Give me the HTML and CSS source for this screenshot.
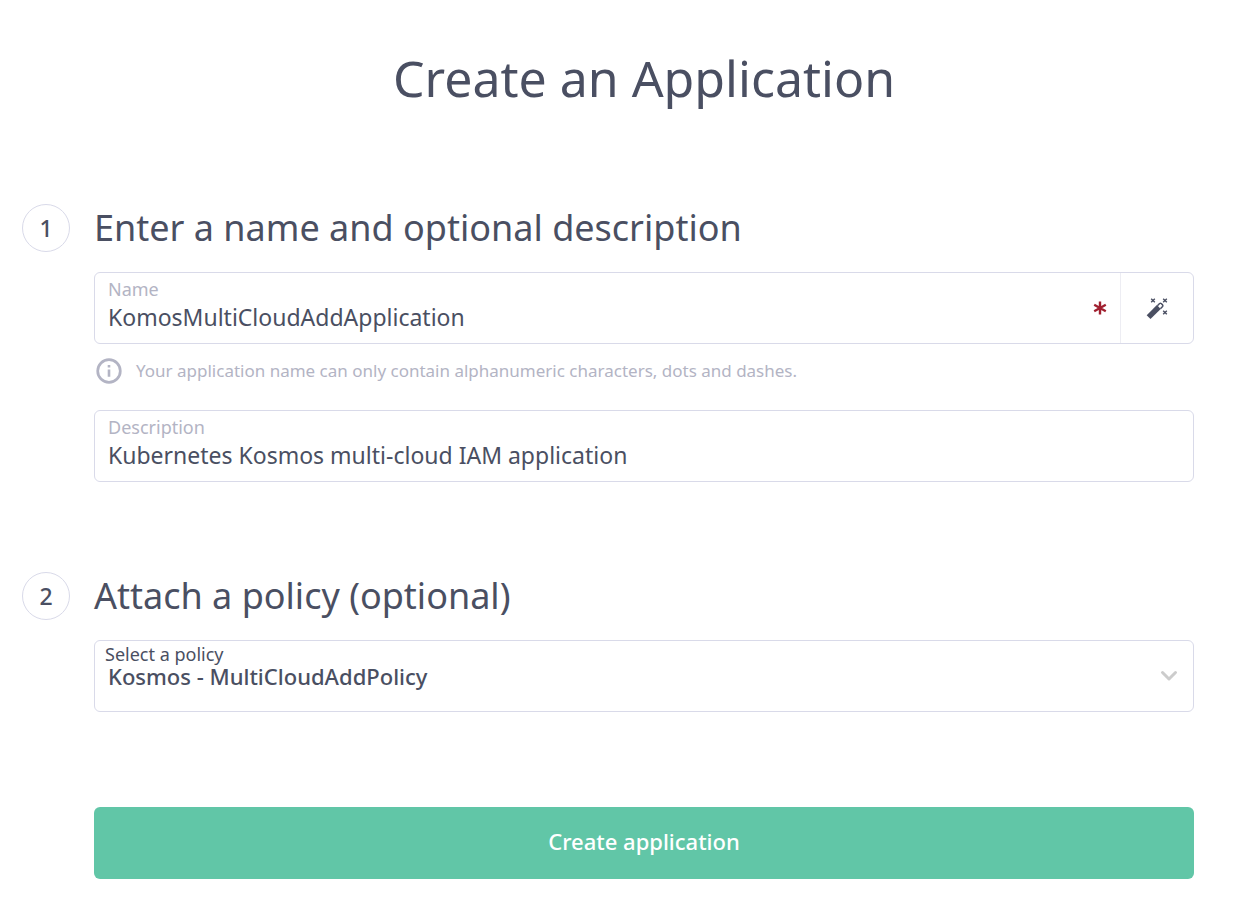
FILE: index.html
```html
<!DOCTYPE html>
<html lang="en">
<head>
<meta charset="utf-8">
<title>Create an Application</title>
<meta name="viewport" content="width=device-width, initial-scale=1">
<link rel="stylesheet" href="styles.css">
</head>
<body>
<form class="page">
  <h1 class="title">Create an Application</h1>

  <section class="step">
    <span class="step-number">1</span>
    <h2 class="step-title">Enter a name and optional description</h2>
    <div class="step-body">
      <div class="field">
        <div class="field-main">
          <label class="field-label" for="name">Name</label>
          <input class="field-input" id="name" type="text" value="KomosMultiCloudAddApplication" required>
        </div>
        <svg class="required" viewBox="0 0 14 14" aria-hidden="true"><path d="M7 .5v13M1.200 3.800l11.600 6.400M12.800 3.800L1.200 10.200"/></svg>
        <button class="generate" type="button" aria-label="Generate a name">
          <svg class="wand" viewBox="0 0 24 24" aria-hidden="true">
            <path class="wand-body" d="M3.600 21.200L13.800 11"/>
            <path class="wand-tip" d="M12.400 9.700L14.600 7.500Q15.400 6.900 16.200 7.500L17.600 8.900Q18.200 9.700 17.600 10.500L15.400 12.700"/>
            <path class="wand-spark" d="M6.200 2.700l3.600 3.600M9.800 2.700L6.200 6.300M18.200 2.700l3.600 3.600M21.800 2.700l-3.600 3.600M18.200 14.700l3.600 3.600M21.800 14.700l-3.600 3.600"/>
          </svg>
        </button>
      </div>
      <p class="hint">
        <svg class="hint-icon" viewBox="0 0 26 26" aria-hidden="true">
          <circle class="ring" cx="13" cy="13" r="11.300"/>
          <path class="ink" d="M11.700 7h2.600v2.600h-2.600zM11.700 11.400h2.600v7.400h-2.600z"/>
        </svg>
        <span>Your application name can only contain alphanumeric characters, dots and dashes.</span>
      </p>
      <div class="field">
        <div class="field-main">
          <label class="field-label" for="description">Description</label>
          <input class="field-input" id="description" type="text" value="Kubernetes Kosmos multi-cloud IAM application">
        </div>
      </div>
    </div>
  </section>

  <section class="step">
    <span class="step-number">2</span>
    <h2 class="step-title">Attach a policy (optional)</h2>
    <div class="step-body">
      <div class="field">
        <div class="field-main field-main-select">
          <label class="select-label" for="policy">Select a policy</label>
          <select class="field-select" id="policy">
            <option>Kosmos - MultiCloudAddPolicy</option>
          </select>
        </div>
        <svg class="chevron" viewBox="0 0 18 12" aria-hidden="true"><path d="M2.500 2.500L9 9l6.500-6.500"/></svg>
      </div>
    </div>
  </section>

  <button class="submit" type="submit">Create application</button>
</form>
</body>
</html>
```
FILE: styles.css
```css
* {
  box-sizing: border-box;
}

body {
  margin: 0;
  background: #fff;
  color: #4a4f62;
  font-family: "Noto Sans", "Open Sans", sans-serif;
}

.page {
  display: flex;
  flex-direction: column;
  padding: 38px 48px 24px 22px;
}

.title {
  margin: 0 0 86px 72px;
  font-size: 50px;
  line-height: 80px;
  font-weight: 400;
  text-align: center;
}

.step {
  display: grid;
  grid-template-columns: 48px minmax(0, 1fr);
  column-gap: 24px;
  row-gap: 20px;
  margin-bottom: 90px;
}

.step-number {
  display: flex;
  align-items: center;
  justify-content: center;
  height: 48px;
  border: 1px solid #d9dae9;
  border-radius: 50%;
  font-size: 23px;
  font-weight: 500;
}

.step-title {
  margin: 0;
  font-size: 36px;
  line-height: 48px;
  font-weight: 400;
}

.step-body {
  grid-column: 2;
}

.field {
  display: flex;
  align-items: center;
  height: 72px;
  border: 1px solid #d9dae9;
  border-radius: 6px;
}

.field-main {
  display: flex;
  flex: 1;
  flex-direction: column;
  align-self: flex-start;
  min-width: 0;
  padding: 4px 0 0 13px;
}

.field-label {
  color: #b3b4c4;
  font-size: 18px;
  line-height: 24px;
}

.field-input,
.field-select {
  width: 100%;
  height: 32px;
  padding: 0;
  border: 0;
  outline: 0;
  background: transparent;
  color: inherit;
  font-family: inherit;
  font-size: 23px;
}

.field-main-select {
  padding: 1px 0 0 10px;
}

.select-label {
  font-size: 18px;
  line-height: 24px;
}

.field-select {
  height: 32px;
  margin-top: -6px;
  padding-left: 3px;
  font-size: 22px;
  line-height: 32px;
  font-weight: 500;
  appearance: none;
}

.required {
  flex: none;
  width: 14px;
  height: 14px;
  margin-right: 13px;
  fill: none;
  stroke: #a01f2f;
  stroke-width: 2.4;
}

.generate {
  display: flex;
  flex: none;
  align-items: center;
  justify-content: center;
  align-self: stretch;
  width: 73px;
  padding: 0;
  border: 0;
  border-left: 1px solid #ededf3;
  background: transparent;
}

.wand {
  width: 24px;
  height: 24px;
}

.wand-body,
.wand-tip,
.wand-spark {
  fill: none;
  stroke: #4a4f62;
}

.wand-body {
  stroke-width: 5.4;
}

.wand-tip {
  stroke-width: 1.5;
  stroke-linejoin: round;
}

.wand-spark {
  stroke-width: 1.4;
}

.hint {
  display: flex;
  align-items: center;
  gap: 14px;
  margin: 14px 0 26px 2px;
  color: #b3b4c4;
  font-size: 17px;
  line-height: 26px;
}

.hint-icon {
  flex: none;
  width: 26px;
  height: 26px;
}

.ring {
  fill: none;
  stroke: #b3b4c4;
  stroke-width: 2.7;
}

.ink {
  fill: #b3b4c4;
}

.chevron {
  flex: none;
  width: 18px;
  height: 12px;
  margin-right: 15px;
  fill: none;
  stroke: #cccccc;
  stroke-width: 3;
  stroke-linecap: round;
  stroke-linejoin: round;
}

.submit {
  height: 72px;
  margin: 5px 0 0 72px;
  padding: 0 0 4px;
  border: 0;
  border-radius: 6px;
  background: #61c6a7;
  color: #fff;
  font-family: inherit;
  font-size: 22px;
  font-weight: 500;
}
```
